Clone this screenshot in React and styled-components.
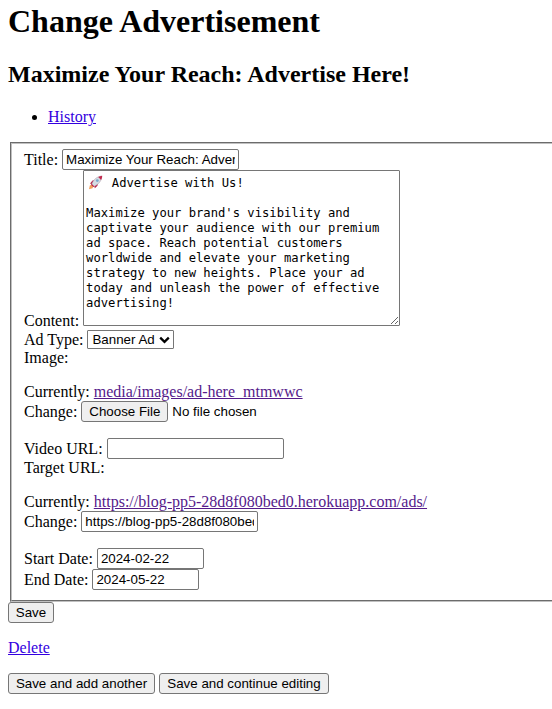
import React from 'react';
import styled, { createGlobalStyle } from 'styled-components';

const GlobalStyle = createGlobalStyle`
  html { overflow: hidden; }
  body {
    margin: 0;
    background: #fff;
    color: #000;
    font: 16px/18px "Liberation Serif", "Times New Roman", serif;
  }
`;

const Page = styled.main`
  height: 709px;
  padding: 0 8px;
  box-sizing: border-box;
  overflow: hidden;
  white-space: nowrap;
`;

const Title = styled.h1`
  margin: 0;
  padding-top: 3px;
  font-size: 32px;
  line-height: 36px;
`;

const Subtitle = styled.h2`
  margin: 21px 0 0;
  font-size: 24px;
  line-height: 28px;
`;

const Tools = styled.ul`
  margin: 20px 0 0;
  padding-left: 40px;
`;

const Link = styled.a`
  color: ${(p) => (p.$visited ? '#551a8b' : p.$active ? '#3300e0' : '#0000ee')};
  text-decoration: underline;
`;

const Fieldset = styled.fieldset`
  width: 600px;
  height: 460px;
  box-sizing: border-box;
  margin: 16px 0 0 2px;
  padding: 5px 12px 0;
  border: 2px groove #c0c0c0;
`;

const Row = styled.div`
  display: flex;
  align-items: ${(p) => p.$align || 'center'};
  gap: 4px;
  height: ${(p) => p.$h}px;
  margin-top: ${(p) => p.$mt || 0}px;
`;

const Input = styled.input`
  width: ${(p) => p.$w || 177}px;
  height: 21px;
  box-sizing: border-box;
  margin: 0;
  padding: 1px 3px;
  border: 1px solid #767676;
  border-radius: 2px;
  background: #fff;
  color: #000;
  font: 13.333px "Liberation Sans", Arial, sans-serif;
`;

const TextArea = styled.div`
  width: 317px;
  height: 156px;
  box-sizing: border-box;
  padding: 4px 2px 2px;
  border: 1px solid #767676;
  border-radius: 1px;
  overflow: auto;
  resize: both;
  white-space: pre-wrap;
  font: 12.18px/15px "DejaVu Sans Mono", monospace;
`;

const RocketIcon = styled.svg`
  width: 15px;
  height: 15px;
  margin: 0 1.7px;
  vertical-align: -3px;
`;

const SelectBox = styled.button`
  display: flex;
  align-items: center;
  justify-content: space-between;
  width: 87px;
  height: 19px;
  box-sizing: border-box;
  padding: 0 3px 0 4px;
  border: 1px solid #767676;
  border-radius: 1px;
  background: #fff;
  color: #000;
  font: 13.333px "Liberation Sans", Arial, sans-serif;
`;

const Button = styled.button`
  width: ${(p) => p.$w}px;
  height: 21px;
  box-sizing: border-box;
  margin: 0;
  padding: 0;
  border: 1px solid #767676;
  border-radius: 3px;
  background: #efefef;
  color: #000;
  font: 13.333px "Liberation Sans", Arial, sans-serif;
`;

const FileStatus = styled.span`
  font: 13.333px "Liberation Sans", Arial, sans-serif;
`;

const CONTENT = ` Advertise with Us!

Maximize your brand's visibility and
captivate your audience with our premium
ad space. Reach potential customers
worldwide and elevate your marketing
strategy to new heights. Place your ad
today and unleash the power of effective
advertising!`;

function Rocket() {
  return (
    <RocketIcon viewBox="0 0 15 15" aria-label="rocket">
      <path d="M1 14.2 L1.8 10.5 L4 9.5 L5.6 11 L4.5 13.2Z" fill="#f4a05c" />
      <path d="M2 8.5 L4.5 5.5 L7 5.2 L4 9.2Z M6.3 11.2 L9.8 8 L9.5 10.8 L6.8 13.3Z" fill="#b8264c" />
      <path d="M3.8 9.2 C5 5 8.8 1.5 13.8 1 C13.8 5.6 10.5 9.6 6 11.3Z" fill="#d5dce3" stroke="#a48e9c" strokeWidth=".5" />
      <path d="M10.2 1.9 Q12 1 14.2 .8 Q14.1 3 13.1 5Z" fill="#c3284c" />
      <path d="M3.6 8.7 L6.4 11.4 L5.3 12 L3 9.7Z" fill="#b8264c" />
      <circle cx="9.3" cy="5.6" r="1.4" fill="#78a9cc" />
    </RocketIcon>
  );
}

export default function App() {
  return (
    <>
      <GlobalStyle />
      <Page>
        <Title>Change Advertisement</Title>
        <Subtitle>Maximize Your Reach: Advertise Here!</Subtitle>
        <Tools>
          <li><Link $active href="#history">History</Link></li>
        </Tools>
        <Fieldset>
          <Row $h={21}>Title: <Input defaultValue="Maximize Your Reach: Advertise Here!" /></Row>
          <Row $h={160} $align="flex-start">
            <Row as="span" $h={18} $mt={142}>Content:</Row>
            <TextArea role="textbox" aria-multiline="true"><Rocket />{CONTENT}</TextArea>
          </Row>
          <Row $h={19}>
            Ad Type:
            <SelectBox>
              Banner Ad
              <svg width="11" height="8" viewBox="0 0 11 8" aria-hidden="true">
                <path d="M1.2 1.6 L5.5 5.8 L9.8 1.6" fill="none" stroke="#000" strokeWidth="2.3" />
              </svg>
            </SelectBox>
          </Row>
          <Row $h={18}>Image:</Row>
          <Row $h={18} $mt={16}>Currently: <Link $visited href="#image">media/images/ad-here_mtmwwc</Link></Row>
          <Row $h={21}>Change: <Button $w={87}>Choose File</Button><FileStatus>No file chosen</FileStatus></Row>
          <Row $h={21} $mt={16}>Video URL: <Input defaultValue="" /></Row>
          <Row $h={18}>Target URL:</Row>
          <Row $h={18} $mt={16}>Currently: <Link $visited href="#target">https://blog-pp5-28d8f080bed0.herokuapp.com/ads/</Link></Row>
          <Row $h={21}>Change: <Input defaultValue="https://blog-pp5-28d8f080bed0.herokuapp.com/ads/" /></Row>
          <Row $h={21} $mt={16}>Start Date: <Input $w={107} defaultValue="2024-02-22" /></Row>
          <Row $h={21}>End Date: <Input $w={107} defaultValue="2024-05-22" /></Row>
        </Fieldset>
        <Row $h={21}><Button $w={46}>Save</Button></Row>
        <Row $h={18} $mt={16}><Link $active href="#delete">Delete</Link></Row>
        <Row $h={21} $mt={16}>
          <Button $w={147}>Save and add another</Button>
          <Button $w={170}>Save and continue editing</Button>
        </Row>
      </Page>
    </>
  );
}
